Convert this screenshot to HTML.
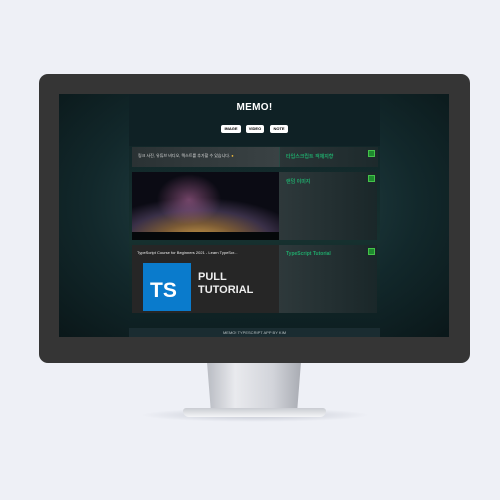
<!DOCTYPE html><html><head><style>
body{margin:0;width:500px;height:500px;background:#eef0f6;position:relative;overflow:hidden;font-family:"Liberation Sans","Noto Sans CJK KR",sans-serif}
.a{position:absolute}
</style></head><body>
<div class="a" style="left:140px;top:408px;width:230px;height:14px;border-radius:50%;background:radial-gradient(ellipse,rgba(150,155,170,.5),rgba(238,240,246,0) 70%)"></div>
<div class="a" style="left:207px;top:362px;width:94px;height:48px;background:linear-gradient(90deg,#b9bcc3,#e9eaee 30%,#d2d4da 70%,#a9acb3);clip-path:polygon(0 0,100% 0,96% 100%,4% 100%)"></div>
<div class="a" style="left:183px;top:408px;width:143px;height:9px;background:linear-gradient(#c9ccd2,#f4f5f7);border-radius:3px 3px 6px 6px"></div>
<div class="a" style="left:39px;top:74px;width:431px;height:289px;background:#353535;border-radius:9px"></div>
<div class="a" style="left:59px;top:94px;width:390px;height:243px;background:radial-gradient(ellipse at 50% 45%,#2a4a4e,#12282b 60%,#0a1719);overflow:hidden">
 <div class="a" style="left:70px;top:0;width:251px;height:243px;background:linear-gradient(#0f2226,#16302f 60%,#0d1e21)"></div>
 <div class="a" style="left:70px;top:0;width:251px;height:52px;background:#0f2125"></div>
 <div class="a" style="left:70px;top:234px;width:251px;height:9px;background:#1a2c31"></div>
 <div class="a" style="left:70px;top:236px;width:251px;text-align:center;color:#b8c2c4;font-size:4px">MEMO! TYPESCRIPT APP BY KIM</div>
 <div class="a" style="left:70px;top:8px;width:251px;text-align:center;color:#fff;font-weight:900;font-size:10px;letter-spacing:.3px">MEMO!</div>
 <div class="a" style="left:162px;top:31px;width:20px;height:8px;background:#fff;border-radius:2px;font-size:4px;font-weight:bold;text-align:center;line-height:8px">IMAGE</div>
 <div class="a" style="left:187px;top:31px;width:18px;height:8px;background:#fff;border-radius:2px;font-size:4px;font-weight:bold;text-align:center;line-height:8px">VIDEO</div>
 <div class="a" style="left:211px;top:31px;width:18px;height:8px;background:#fff;border-radius:2px;font-size:4px;font-weight:bold;text-align:center;line-height:8px">NOTE</div>
 <div class="a" style="left:73px;top:53px;width:147px;height:20px;background:linear-gradient(90deg,#2a3234,#3a4244)"></div>
 <div class="a" style="left:79px;top:59px;color:#ddd;font-size:4px">링크 사진, 유튜브 비디오, 텍스트를 추가할 수 있습니다. <span style="color:#e8b53a">●</span></div>
 <div class="a" style="left:220px;top:53px;width:98px;height:20px;background:linear-gradient(90deg,#2b3537,#1d2a2c);border-left:1px solid #2a4a44"></div>
 <div class="a" style="left:227px;top:59px;color:#20a66a;font-size:5px;font-weight:bold">타입스크립트 객체지향</div>
 <div class="a" style="left:73px;top:78px;width:147px;height:68px;background:radial-gradient(ellipse 90% 80% at 45% 100%,#d0a04a,#7a5a35 30%,#3a3048 55%,#0b0b14 78%)"></div>
 <div class="a" style="left:95px;top:78px;width:70px;height:55px;background:radial-gradient(ellipse,rgba(210,120,180,.5),rgba(0,0,0,0) 65%)"></div>
 <div class="a" style="left:73px;top:138px;width:147px;height:8px;background:#05080a"></div>
 <div class="a" style="left:220px;top:78px;width:98px;height:68px;background:linear-gradient(90deg,#2e393b,#1a2729)"></div>
 <div class="a" style="left:227px;top:84px;color:#20a66a;font-size:5px;font-weight:bold">랜덤 이미지</div>
 <div class="a" style="left:73px;top:151px;width:147px;height:68px;background:#262626"></div>
 <div class="a" style="left:78px;top:156px;color:#eee;font-size:4px;white-space:nowrap">TypeScript Course for Beginners 2021 - Learn TypeScr...</div>
 <div class="a" style="left:84px;top:169px;width:48px;height:48px;background:#0a7bcc"></div>
 <div class="a" style="left:91px;top:185px;color:#fff;font-size:21px;font-weight:bold">TS</div>
 <div class="a" style="left:139px;top:177px;color:#eee;font-size:11px;font-weight:bold;line-height:13px">PULL<br>TUTORIAL</div>
 <div class="a" style="left:220px;top:151px;width:98px;height:68px;background:linear-gradient(90deg,#2e393b,#1a2729)"></div>
 <div class="a" style="left:227px;top:157px;color:#20a66a;font-size:5px;font-weight:bold">TypeScript Tutorial</div>
 <div class="a" style="left:309px;top:56px;width:5px;height:5px;background:#1e8a2e;border:1px solid #45c24a"></div>
 <div class="a" style="left:309px;top:81px;width:5px;height:5px;background:#1e8a2e;border:1px solid #45c24a"></div>
 <div class="a" style="left:309px;top:154px;width:5px;height:5px;background:#1e8a2e;border:1px solid #45c24a"></div>
</div>
</body></html>
